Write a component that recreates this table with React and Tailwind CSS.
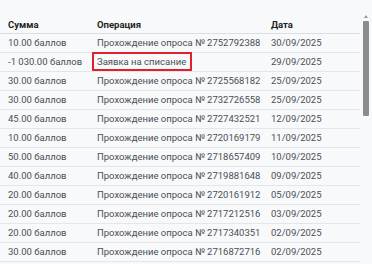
const rows = [
  { sum: '10.00 баллов', op: 'Прохождение опроса № 2752792388', date: '30/09/2025' },
  { sum: '-1 030.00 баллов', op: 'Заявка на списание', date: '29/09/2025', flagged: true },
  { sum: '30.00 баллов', op: 'Прохождение опроса № 2725568182', date: '25/09/2025' },
  { sum: '30.00 баллов', op: 'Прохождение опроса № 2732726558', date: '25/09/2025' },
  { sum: '45.00 баллов', op: 'Прохождение опроса № 2727432521', date: '12/09/2025' },
  { sum: '10.00 баллов', op: 'Прохождение опроса № 2720169179', date: '11/09/2025' },
  { sum: '50.00 баллов', op: 'Прохождение опроса № 2718657409', date: '10/09/2025' },
  { sum: '40.00 баллов', op: 'Прохождение опроса № 2719881648', date: '09/09/2025' },
  { sum: '20.00 баллов', op: 'Прохождение опроса № 2720161912', date: '05/09/2025' },
  { sum: '20.00 баллов', op: 'Прохождение опроса № 2717212516', date: '03/09/2025' },
  { sum: '20.00 баллов', op: 'Прохождение опроса № 2717340351', date: '02/09/2025' },
  { sum: '30.00 баллов', op: 'Прохождение опроса № 2716872716', date: '02/09/2025' },
]

export default function App() {
  return (
    <div
      className="w-[372px] h-[264px] overflow-hidden bg-[#f8f9fa] flex text-[9.5px] text-[#4a4f55]"
      style={{ fontFamily: 'Roboto, "Noto Sans", sans-serif' }}
    >
      {/* Table */}
      <div className="w-[360px] pt-[13px]">
        <div className="flex h-[21px] items-center pt-[4px] border-b border-[#dcdfe2] font-bold text-[#222]">
          <div className="w-[89px] px-2">Сумма</div>
          <div className="w-[174px] px-2">Операция</div>
          <div className="flex-1 px-2">Дата</div>
        </div>
        {rows.map((r, i) => (
          <div key={i} className="flex h-[19px] items-center border-b border-[#e4e6e9]">
            <div className="w-[89px] px-2 whitespace-nowrap">{r.sum}</div>
            <div className="w-[174px] px-2 whitespace-nowrap">
              {r.flagged ? (
                <span className="relative">
                  {r.op}
                  <span className="absolute -left-[5px] -right-[6px] -top-[4px] -bottom-[4px] border-2 border-[#e0202a]" />
                </span>
              ) : (
                r.op
              )}
            </div>
            <div className="flex-1 px-2 whitespace-nowrap">{r.date}</div>
          </div>
        ))}
      </div>

      {/* Scrollbar */}
      <div className="flex-1 flex flex-col items-center pt-[15px]">
        <div className="w-0 h-0 border-l-[2px] border-r-[2px] border-b-[3px] border-l-transparent border-r-transparent border-b-[#9a9a9a]" />
        <div className="mt-[3px] w-[6px] h-[95px] rounded-[1px] bg-[#8c8c8c]" />
      </div>
    </div>
  )
}
